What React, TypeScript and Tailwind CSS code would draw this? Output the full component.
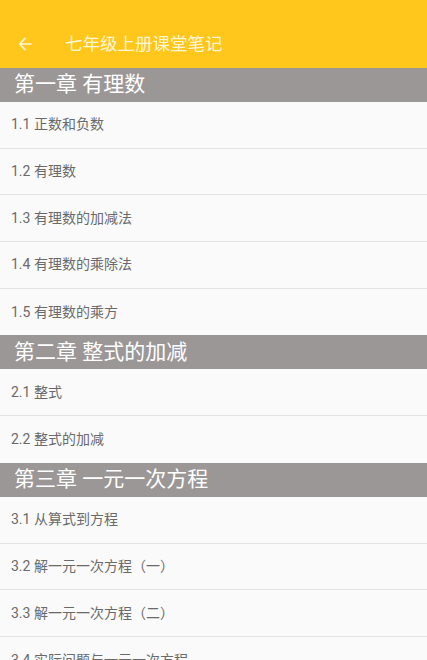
import React from 'react';

type Chapter = { title: string; lessons: string[] };

const chapters: Chapter[] = [
  {
    title: '第一章 有理数',
    lessons: ['1.1 正数和负数', '1.2 有理数', '1.3 有理数的加减法', '1.4 有理数的乘除法', '1.5 有理数的乘方'],
  },
  {
    title: '第二章 整式的加减',
    lessons: ['2.1 整式', '2.2 整式的加减'],
  },
  {
    title: '第三章 一元一次方程',
    lessons: ['3.1 从算式到方程', '3.2 解一元一次方程（一）', '3.3 解一元一次方程（二）', '3.4 实际问题与一元一次方程'],
  },
];

const font = { fontFamily: 'Roboto, "Noto Sans CJK SC", sans-serif' };

export default function App() {
  return (
    <div className="w-[427px] h-[660px] overflow-hidden bg-[#fafafa]" style={font}>
      <header className="h-[68px] bg-[#ffc61c] flex items-center pt-[20px] pl-[15px] gap-[30px]">
        <svg width="20" height="20" viewBox="0 0 24 24">
          <path
            d="M20 11H7.83l5.59-5.59L12 4l-8 8 8 8 1.41-1.41L7.83 13H20v-2z"
            fill="#fff6d6"
          />
        </svg>
        <h1 className="text-[17.5px] text-[#fff6d6] leading-[24px]">七年级上册课堂笔记</h1>
      </header>

      {chapters.map((ch) => (
        <section key={ch.title}>
          <div className="h-[34px] bg-[#9c9797] flex items-center px-[14px] text-white text-[21px]">
            {ch.title}
          </div>
          {ch.lessons.map((l, i) => (
            <div
              key={l}
              className={
                'h-[46.7px] flex items-center px-[11px] text-[14px] text-[#6a6a6a] bg-[#fafafa] ' +
                (i < ch.lessons.length - 1 ? 'border-b border-[#e3e3e3]' : '')
              }
            >
              {l}
            </div>
          ))}
        </section>
      ))}
    </div>
  );
}
